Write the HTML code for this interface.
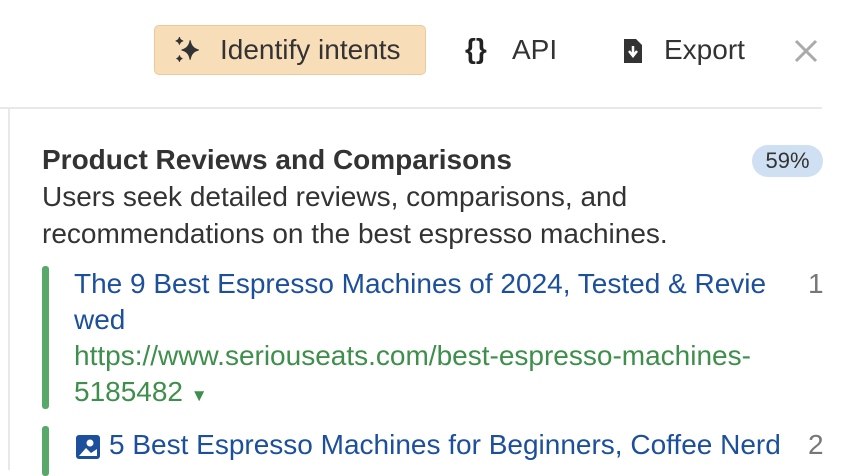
<!DOCTYPE html>
<html><head><meta charset="utf-8"><style>
body{margin:0;width:852px;height:470px;overflow:hidden;background:#fff;font-family:"Liberation Sans",Arial,sans-serif;position:relative}
.a{position:absolute;white-space:nowrap}
</style></head><body>
<div class="a" style="left:154px;top:25px;width:272px;height:50px;background:#f8ddb9;border:1px solid #ecc99b;border-radius:5px;box-sizing:border-box"></div>
<svg class="a" style="left:173px;top:35px" width="30" height="30" viewBox="0 0 28 28"><path d="M16 5 Q17 12.5 24 14 Q17 15.5 16 23 Q15 15.5 8 14 Q15 12.5 16 5Z" fill="#333" stroke="#333" stroke-width="1"/><path d="M6 2 Q6.6 5 9.5 5.5 Q6.6 6 6 9 Q5.4 6 2.5 5.5 Q5.4 5 6 2Z" fill="#333" stroke="#333" stroke-width=".8"/><path d="M6 19 Q6.5 21.5 8.8 22 Q6.5 22.5 6 25 Q5.5 22.5 3.2 22 Q5.5 21.5 6 19Z" fill="#333" stroke="#333" stroke-width=".8"/></svg>
<div class="a" style="left:220px;top:32px;font-size:28px;line-height:36px;color:#333">Identify intents</div>
<div class="a" style="left:465px;top:31px;font-size:28px;line-height:36px;font-weight:bold;color:#222">{}</div>
<div class="a" style="left:512px;top:32px;font-size:28px;line-height:36px;color:#333">API</div>
<svg class="a" style="left:622px;top:37px" width="22" height="28" viewBox="0 0 22 28"><path d="M2 2 H14 L20 8 V26 H2Z" fill="#333"/><path d="M11 9 V18 M7 14 L11 19 L15 14" stroke="#fff" stroke-width="2.5" fill="none"/></svg>
<div class="a" style="left:664px;top:32px;font-size:28px;line-height:36px;color:#333">Export</div>
<svg class="a" style="left:794px;top:39px" width="24" height="24"><path d="M2 2 L22 22 M22 2 L2 22" stroke="#aaa" stroke-width="3"/></svg>
<div class="a" style="left:0;top:107px;width:822px;height:2px;background:#e8e8e8"></div>
<div class="a" style="left:8px;top:109px;width:2px;height:361px;background:#e8e8e8"></div>
<div class="a" style="left:42px;top:142px;font-size:28px;line-height:36px;font-weight:bold;color:#333">Product Reviews and Comparisons</div>
<div class="a" style="left:752px;top:145px;width:71px;height:32px;border-radius:16px;background:#cfe0f3;font-size:22px;color:#333;text-align:center;line-height:32px">59%</div>
<div class="a" style="left:42px;top:178px;font-size:28px;color:#333;line-height:37px">Users seek detailed reviews, comparisons, and<br>recommendations on the best espresso machines.</div>
<div class="a" style="left:42px;top:266px;width:7px;height:143px;border-radius:3px;background:#58a86a"></div>
<div class="a" style="left:74px;top:266px;font-size:28px;line-height:36px;color:#1c4f9c">The 9 Best Espresso Machines of 2024, Tested &amp; Revie<br>wed</div>
<div class="a" style="left:74px;top:338px;font-size:28px;line-height:36px;color:#3e8f4b">https://www.seriouseats.com/best-espresso-machines-<br>5185482 <span style="font-size:17px">▼</span></div>
<div class="a" style="left:808px;top:266px;font-size:28px;line-height:36px;color:#777">1</div>
<div class="a" style="left:42px;top:426px;width:7px;height:50px;border-radius:3px;background:#58a86a"></div>
<svg class="a" style="left:75px;top:434px" width="26" height="26" viewBox="0 0 26 26"><rect x="1" y="1" width="24" height="24" rx="3" fill="#1c4f9c"/><circle cx="15" cy="9" r="3.5" fill="#fff"/><path d="M4 22 L11 14 L16 19 L22 15 V22Z" fill="#fff"/></svg>
<div class="a" style="left:109px;top:427px;font-size:28px;line-height:36px;color:#1c4f9c">5 Best Espresso Machines for Beginners, Coffee Nerd</div>
<div class="a" style="left:808px;top:427px;font-size:28px;line-height:36px;color:#777">2</div>
</body></html>
